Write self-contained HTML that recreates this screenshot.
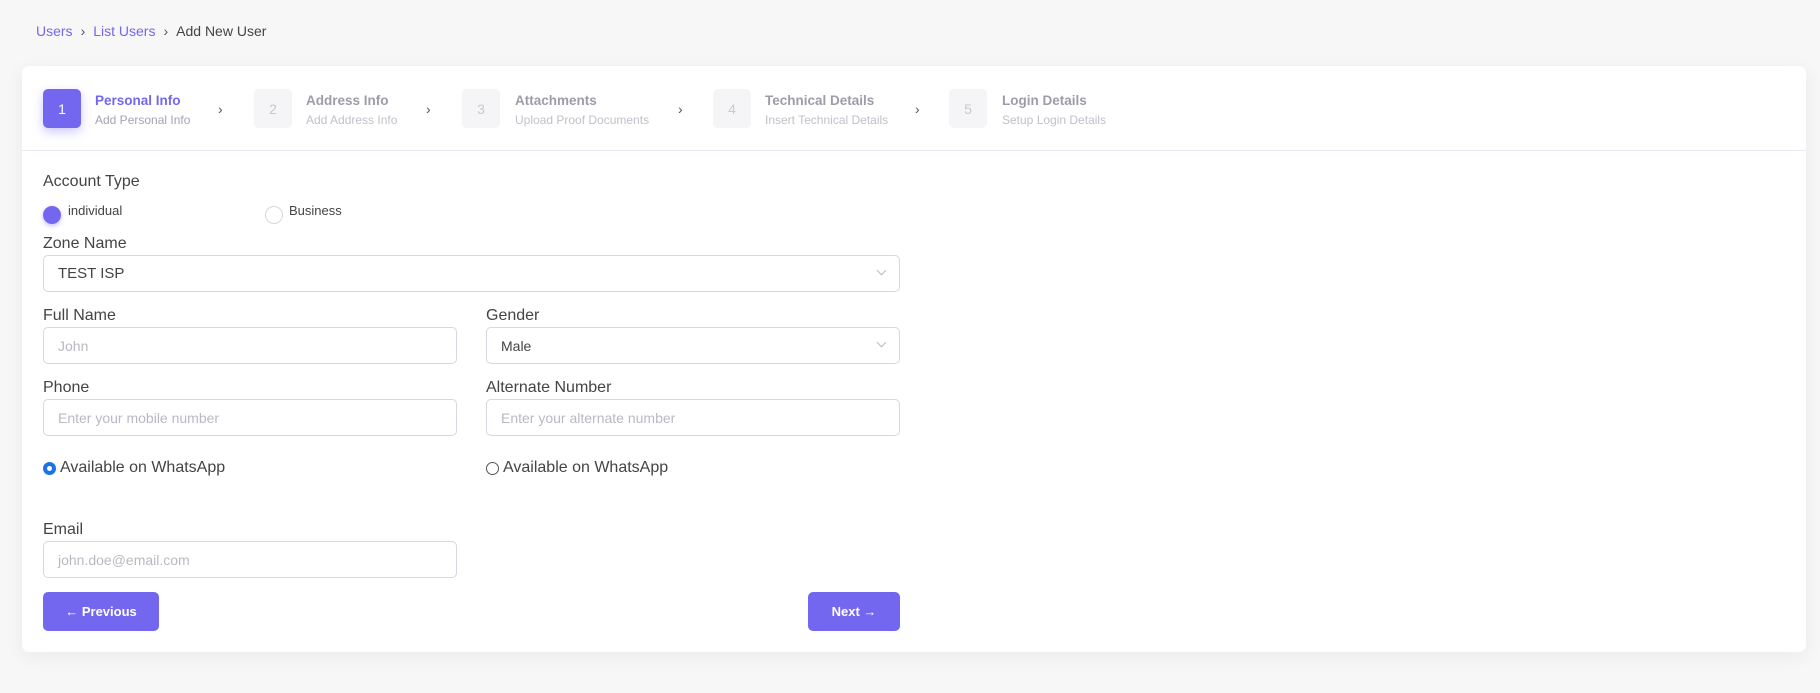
<!DOCTYPE html>
<html><head><style>
*{box-sizing:border-box;margin:0;padding:0}
body{width:1820px;height:693px;background:#f7f7f7;font-family:"Liberation Sans",sans-serif;position:relative;overflow:hidden;color:#444}
.a{position:absolute;white-space:nowrap}
.bc{top:23px;left:36px;font-size:14px;color:#444}
.bc span.l{color:#7367f0}
.bc .s{margin:0 8px;color:#555}
.card{position:absolute;left:22px;top:66px;width:1784px;height:586px;background:#fff;border-radius:7px;box-shadow:0 4px 20px rgba(0,0,0,.06)}
.box{position:absolute;top:23px;width:38px;height:39px;border-radius:5px;background:#f5f5f7;color:#c9c9cf;font-size:14px;display:flex;align-items:center;justify-content:center}
.box.on{background:#7367f0;color:#fff;box-shadow:0 4px 10px rgba(115,103,240,.35)}
.tt{position:absolute;top:27px;font-size:13.5px;font-weight:bold;color:#9e9ca8}
.st{position:absolute;top:47px;font-size:12px;color:#c2c0c8}
.ch{position:absolute;top:35px;font-size:14px;color:#555}
.div{position:absolute;left:0;right:0;top:84px;border-top:1px solid #ebe9f1}
.lbl{position:absolute;font-size:16px;color:#444}
.in{position:absolute;height:37px;border:1px solid #d8d6de;border-radius:5px;font-size:14px;color:#b9b9c3;padding-left:14px;display:flex;align-items:center}
.in.v{color:#444}
.btn{position:absolute;top:526px;height:39px;background:#7367f0;color:#fff;border-radius:5px;font-size:13px;font-weight:bold;display:flex;align-items:center;justify-content:center}
.dd{position:absolute;right:14px;top:11px;width:7px;height:7px;border-right:1px solid #bbb;border-bottom:1px solid #bbb;transform:rotate(45deg)}
</style></head><body>
<div class="a bc"><span class="l">Users</span><span class="s">›</span><span class="l">List Users</span><span class="s">›</span>Add New User</div>
<div class="card">
<div class="box on" style="left:21px">1</div>
<div class="tt" style="left:73px;color:#7367f0">Personal Info</div><div class="st" style="left:73px;color:#a5a3ae">Add Personal Info</div>
<div class="ch" style="left:196px">›</div>
<div class="box" style="left:232px">2</div>
<div class="tt" style="left:284px">Address Info</div><div class="st" style="left:284px">Add Address Info</div>
<div class="ch" style="left:404px">›</div>
<div class="box" style="left:440px">3</div>
<div class="tt" style="left:493px">Attachments</div><div class="st" style="left:493px">Upload Proof Documents</div>
<div class="ch" style="left:656px">›</div>
<div class="box" style="left:691px">4</div>
<div class="tt" style="left:743px">Technical Details</div><div class="st" style="left:743px">Insert Technical Details</div>
<div class="ch" style="left:893px">›</div>
<div class="box" style="left:927px">5</div>
<div class="tt" style="left:980px">Login Details</div><div class="st" style="left:980px">Setup Login Details</div>
<div class="div"></div>
<div class="lbl" style="left:21px;top:107px">Account Type</div>
<div class="a" style="left:21px;top:140px;width:18px;height:18px;border-radius:50%;background:#7367f0;box-shadow:0 2px 5px rgba(115,103,240,.4)"></div>
<div class="a" style="left:46px;top:137px;font-size:13px">individual</div>
<div class="a" style="left:243px;top:140px;width:18px;height:18px;border-radius:50%;border:1px solid #d8d6de"></div>
<div class="a" style="left:267px;top:137px;font-size:13px">Business</div>
<div class="lbl" style="left:21px;top:169px">Zone Name</div>
<div class="in v" style="left:21px;top:189px;width:857px;font-size:15px">TEST ISP<div class="dd"></div></div>
<div class="lbl" style="left:21px;top:241px">Full Name</div>
<div class="in" style="left:21px;top:261px;width:414px">John</div>
<div class="lbl" style="left:464px;top:241px">Gender</div>
<div class="in v" style="left:464px;top:261px;width:414px">Male<div class="dd"></div></div>
<div class="lbl" style="left:21px;top:313px">Phone</div>
<div class="in" style="left:21px;top:333px;width:414px">Enter your mobile number</div>
<div class="lbl" style="left:464px;top:313px">Alternate Number</div>
<div class="in" style="left:464px;top:333px;width:414px">Enter your alternate number</div>
<div class="a" style="left:21px;top:396px;width:13px;height:13px;border-radius:50%;border:4px solid #1a73e8;box-shadow:inset 0 0 0 1px #fff"></div>
<div class="lbl" style="left:38px;top:393px">Available on WhatsApp</div>
<div class="a" style="left:464px;top:396px;width:13px;height:13px;border-radius:50%;border:1px solid #555"></div>
<div class="lbl" style="left:481px;top:393px">Available on WhatsApp</div>
<div class="lbl" style="left:21px;top:455px">Email</div>
<div class="in" style="left:21px;top:475px;width:414px">john.doe@email.com</div>
<div class="btn" style="left:21px;width:116px">← Previous</div>
<div class="btn" style="left:786px;width:92px">Next →</div>
</div>
</body></html>
